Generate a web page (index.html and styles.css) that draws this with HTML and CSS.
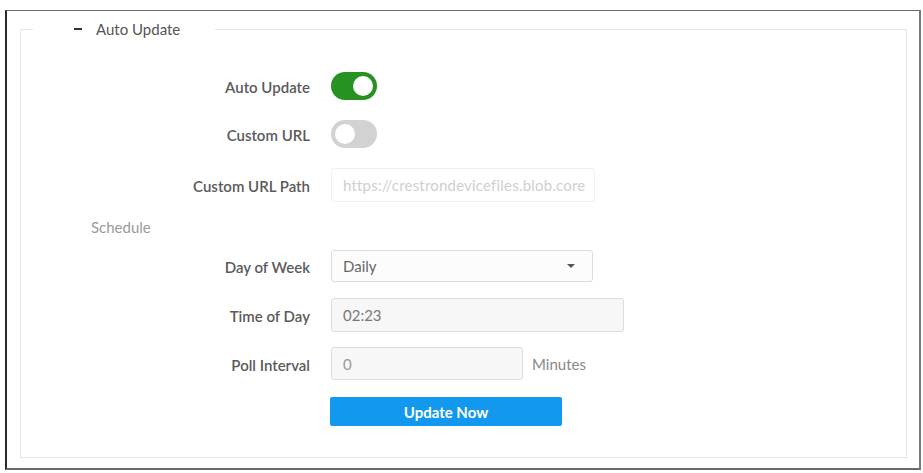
FILE: index.html
```html
<!DOCTYPE html>
<html>
<head>
<meta charset="utf-8">
<link rel="stylesheet" href="styles.css">
</head>
<body>
<div class="frame">
  <fieldset class="panel">
    <legend class="panel-title"><span class="collapse-icon"></span>Auto Update</legend>
    <div class="row row-first">
      <label class="label">Auto Update</label>
      <div class="toggle toggle-on"><span class="knob"></span></div>
    </div>
    <div class="row row-toggle">
      <label class="label">Custom URL</label>
      <div class="toggle toggle-off"><span class="knob"></span></div>
    </div>
    <div class="row row-url">
      <label class="label">Custom URL Path</label>
      <div class="control">
        <input class="input input-disabled" type="text" placeholder="https://crestrondevicefiles.blob.core" readonly>
      </div>
    </div>
    <div class="section-title">Schedule</div>
    <div class="row row-day">
      <label class="label">Day of Week</label>
      <div class="control">
        <div class="select"><span>Daily</span><span class="caret"></span></div>
      </div>
    </div>
    <div class="row row-time">
      <label class="label">Time of Day</label>
      <div class="control">
        <input class="input input-time" type="text" value="02:23" readonly>
      </div>
    </div>
    <div class="row row-poll">
      <label class="label">Poll Interval</label>
      <div class="control control-inline">
        <input class="input input-poll" type="text" value="0" readonly>
        <span class="unit">Minutes</span>
      </div>
    </div>
    <div class="row row-button">
      <span></span>
      <button class="btn-primary" type="button">Update Now</button>
    </div>
  </fieldset>
</div>
</body>
</html>
```

FILE: styles.css
```css
* { box-sizing: border-box; }

html, body {
  margin: 0;
  padding: 0;
  background: #ffffff;
}

body {
  font-family: Lato, "Open Sans", "Liberation Sans", sans-serif;
  color: #555;
}

.frame {
  margin: 10px 2px 0 5px;
  width: 916px;
  height: 460px;
  border: 1px solid #6a6a6a;
  border-left: 2px solid #2a2a2a;
  border-right: 2px solid #7a7a7a;
  border-bottom: 2px solid #6a6a6a;
  padding: 0 12px 0 13px;
}

.panel {
  margin: 8px 0 0 0;
  padding: 0 0 30px 0;
  border: 1px solid #e6e6e6;
  min-width: 0;
  height: 439px;
}

.panel-title {
  margin-left: 12px;
  padding: 0 35px 0 41px;
  line-height: 20px;
  font-size: 15px;
  color: #555;
  display: flex;
  align-items: center;
}

.collapse-icon {
  display: inline-block;
  width: 8px;
  height: 2px;
  background: #333;
  margin-right: 14px;
}

.row {
  display: grid;
  grid-template-columns: 289px 1fr;
  column-gap: 21px;
  align-items: center;
}

.row-first { margin-top: 33px; height: 28px; }
.row-toggle { margin-top: 20px; height: 28px; }
.row-url { margin-top: 20px; height: 34px; }
.row-day { margin-top: 13px; height: 32px; }
.row-time { margin-top: 16px; height: 34px; }
.row-poll { margin-top: 15px; height: 33px; }
.row-button { margin-top: 17px; height: 29px; }

.label {
  text-align: right;
  font-size: 15px;
  font-weight: 600;
  color: #5a5a5a;
  padding-top: 2px;
}

.toggle {
  width: 46px;
  height: 28px;
  border-radius: 14px;
  padding: 4px;
  display: flex;
}

.toggle-on {
  background: #26921f;
  justify-content: flex-end;
}

.toggle-off {
  background: #d2d2d2;
  justify-content: flex-start;
}

.knob {
  width: 20px;
  height: 20px;
  border-radius: 50%;
  background: #fff;
}

.control {
  display: flex;
  align-items: center;
}

.input {
  font-family: Lato, "Open Sans", "Liberation Sans", sans-serif;
  font-size: 15px;
  border: 1px solid #dcdcdc;
  border-radius: 3px;
  padding: 0 11px;
  outline: none;
  color: #666;
}

.input-disabled {
  width: 264px;
  height: 34px;
  border-color: #f0f0f0;
  background: #fff;
  letter-spacing: 0.2px;
  padding-right: 1px;
}

.input-disabled::placeholder {
  color: #cfcfcf;
}

.section-title {
  margin-top: 15px;
  height: 20px;
  line-height: 20px;
  padding-left: 70px;
  font-size: 15px;
  color: #9a9a9a;
}

.select {
  width: 262px;
  height: 32px;
  border: 1px solid #dcdcdc;
  border-radius: 3px;
  background: #fcfcfc;
  display: flex;
  align-items: center;
  justify-content: space-between;
  padding: 0 17px 0 11px;
  font-size: 15px;
  color: #666;
}

.caret {
  width: 0;
  height: 0;
  border-left: 4px solid transparent;
  border-right: 4px solid transparent;
  border-top: 4px solid #555;
}

.input-time {
  width: 293px;
  height: 34px;
  background: #f7f7f7;
  color: #777;
}

.input-poll {
  width: 192px;
  height: 33px;
  background: #f7f7f7;
  color: #999;
}

.control-inline {
  gap: 9px;
}

.unit {
  font-size: 15px;
  color: #888;
}

.btn-primary {
  width: 232px;
  height: 29px;
  border: none;
  border-radius: 2px;
  background: #1298ef;
  color: #fff;
  font-family: Lato, "Open Sans", "Liberation Sans", sans-serif;
  font-weight: 700;
  font-size: 15px;
  padding: 0;
  margin-left: -1px;
}
```
